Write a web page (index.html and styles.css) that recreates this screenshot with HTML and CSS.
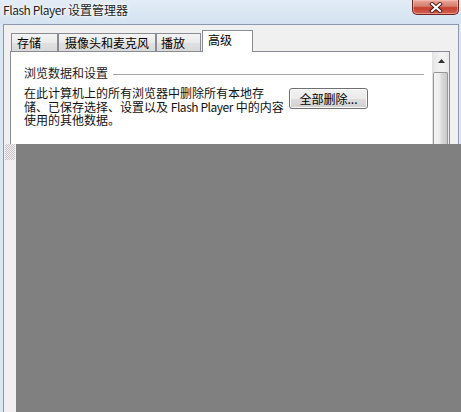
FILE: index.html
```html
<!DOCTYPE html>
<html lang="zh-CN">
<head>
<meta charset="utf-8">
<title>Flash Player 设置管理器</title>
<link rel="stylesheet" href="styles.css">
</head>
<body>
<div class="titlebar">
  <div class="title"><span class="latin">Flash Player</span> 设置管理器</div>
  <div class="close">
    <svg width="14" height="11" viewBox="0 0 14 11">
      <path d="M3 2 L11 9 M11 2 L3 9" stroke="#4a1610" stroke-width="4" stroke-linecap="square" fill="none"/>
      <path d="M3 2 L11 9 M11 2 L3 9" stroke="#ffffff" stroke-width="2.2" stroke-linecap="square" fill="none"/>
    </svg>
  </div>
</div>
<div class="top">
  <div class="frame-l"></div>
  <div class="client">
    <div class="tabs">
      <div class="tab tab-storage">存储</div>
      <div class="tab tab-camera">摄像头和麦克风</div>
      <div class="tab tab-play">播放</div>
      <div class="tab tab-adv active">高级</div>
    </div>
    <div class="pane">
      <div class="content">
        <div class="group-head">
          <span class="group-title">浏览数据和设置</span>
          <span class="rule"></span>
        </div>
        <div class="desc">
          <div class="desc-text">在此计算机上的所有浏览器中删除所有本地存<br>储、已保存选择、设置以及 <span class="latin">Flash Player</span> 中的内容<br>使用的其他数据。</div>
          <div class="btn">全部删除...</div>
        </div>
      </div>
      <div class="scroll">
        <div class="arrow">
          <svg width="7" height="4" viewBox="0 0 7 4"><polygon points="3.5,0 7,4 0,4" fill="#303030"/></svg>
        </div>
        <div class="thumb"></div>
      </div>
    </div>
  </div>
  <div class="frame-r"></div>
</div>
<div class="bottom">
  <div class="bottom-left"><div class="grip"></div></div>
  <div class="overlay"></div>
</div>
</body>
</html>
```
FILE: styles.css
```css
html, body {
  margin: 0;
  padding: 0;
}
body {
  width: 461px;
  height: 412px;
  overflow: hidden;
  background: #dbe6f3;
  font-family: "Noto Sans CJK SC", "Noto Sans", sans-serif;
  font-size: 12px;
  color: #000;
}
.latin {
  letter-spacing: -0.45px;
}
.titlebar {
  height: 24px;
  display: flex;
  align-items: flex-start;
  background: linear-gradient(to bottom, #e3ecf7, #d4e2f1);
}
.title {
  padding-left: 3px;
  height: 20px;
  line-height: 20px;
  color: #1e1e1e;
  text-shadow: 0 0 6px rgba(255,255,255,0.95), 0 0 3px #fff;
}
.close {
  margin-left: auto;
  margin-right: 2px;
  width: 47px;
  height: 15px;
  box-sizing: border-box;
  border: 1px solid #6a2820;
  border-top: none;
  border-radius: 0 0 5px 5px;
  background: linear-gradient(to bottom, #e9a99c 0%, #d77b6c 45%, #c3402f 55%, #d5604f 100%);
  display: flex;
  align-items: center;
  justify-content: center;
  box-shadow: inset 0 0 0 1px rgba(255,200,190,0.5);
}
.top {
  display: flex;
  height: 120px;
}
.frame-l {
  width: 3px;
}
.frame-r {
  width: 2px;
}
.client {
  flex: 1;
  display: flex;
  flex-direction: column;
  background: #f0f0f0;
  border: 1px solid #8b99ab;
  border-bottom: none;
  padding-top: 5px;
}
.tabs {
  display: flex;
  align-items: flex-end;
  height: 21px;
  margin-left: 7px;
}
.tab {
  box-sizing: border-box;
  height: 18px;
  border: 1px solid #898c95;
  border-bottom: none;
  background: linear-gradient(to bottom, #f4f4f4, #eaeaea 50%, #e0e0e0 55%, #d9d9d9);
  padding-left: 5px;
  line-height: 17px;
  white-space: nowrap;
  color: #000;
}
.tab-storage { width: 47px; }
.tab-camera { width: 98px; padding-left: 6px; }
.tab-play { width: 45px; padding-left: 4px; }
.tab-adv { width: 51px; margin-left: 1px; }
.tab.active {
  height: 22px;
  margin-bottom: -1px;
  background: #fff;
  position: relative;
  z-index: 1;
  line-height: 18px;
  padding-left: 5px;
}
.pane {
  flex: 1;
  display: flex;
  margin-left: 6px;
  margin-right: 8px;
  border: 1px solid #898c95;
  border-bottom: none;
  background: #fff;
}
.content {
  flex: 1;
  padding: 14px 8px 0 13px;
}
.group-head {
  display: flex;
  height: 14px;
  line-height: 14px;
}
.group-title {
  white-space: nowrap;
  color: #1a1a1a;
}
.rule {
  flex: 1;
  height: 1px;
  margin-top: 8px;
  margin-left: 5px;
  background: #a6a6a6;
}
.desc {
  display: flex;
  margin-top: 6px;
}
.desc-text {
  width: 265px;
  white-space: nowrap;
  line-height: 13.5px;
  color: #111;
}
.btn {
  box-sizing: border-box;
  width: 79px;
  height: 21px;
  margin-top: 2px;
  border: 1px solid #707070;
  border-radius: 3px;
  background: linear-gradient(to bottom, #f2f2f2 0%, #ebebeb 50%, #dddddd 51%, #cfcfcf 100%);
  box-shadow: inset 0 0 0 1px #fcfcfc;
  text-align: center;
  line-height: 19px;
  white-space: nowrap;
}
.scroll {
  width: 17px;
  box-sizing: border-box;
  border-left: 1px solid #e2e2e2;
  background: linear-gradient(to right, #e6e6e6, #f1f1f1 40%, #f1f1f1 70%, #e8e8e8);
  display: flex;
  flex-direction: column;
}
.arrow {
  height: 18px;
  display: flex;
  align-items: center;
  justify-content: center;
}
.thumb {
  flex: 1;
  margin: 2px 1px 0 0;
  border: 1px solid #979797;
  border-bottom: none;
  border-radius: 2px 2px 0 0;
  background: linear-gradient(to right, #f5f5f5, #ececec 45%, #dcdcdc 55%, #c9c9c9);
}
.bottom {
  display: flex;
  height: 268px;
}
.bottom-left {
  width: 16px;
  background: linear-gradient(to right, #dbe6f3 0, #dbe6f3 3px, #8b99ab 3px, #8b99ab 4px, #f0f0f0 4px);
}
.grip {
  width: 10px;
  height: 16px;
  margin-left: 5px;
  background-image: repeating-conic-gradient(#b4b4b4 0 25%, transparent 0 50%);
  background-size: 2px 2px;
  opacity: 0.7;
}
.overlay {
  flex: 1;
  background: #808080;
}
```
